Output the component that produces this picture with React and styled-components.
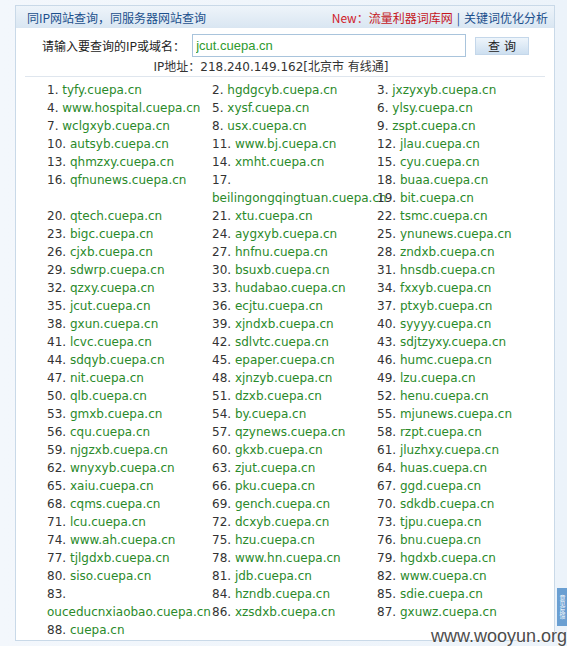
import React from 'react';
import styled, { createGlobalStyle } from 'styled-components';

const GlobalStyle = createGlobalStyle`
  html, body { margin: 0; padding: 0; }
  body {
    background: #eef4fa;
    font-family: "DejaVu Sans", "Noto Sans CJK SC", sans-serif;
    font-size: 12px;
    color: #333;
  }
`;

const Page = styled.div`
  position: relative;
  box-sizing: border-box;
  width: 567px;
  height: 646px;
  overflow: hidden;
  padding: 5px 0 0 15px;
  background: linear-gradient(to right, #f3f7fc 0%, #ecf3fa 100%);
`;

const Panel = styled.div`
  box-sizing: border-box;
  width: 540px;
  background: #fff;
  border: 1px solid #c9d9e8;
`;

const Header = styled.div`
  display: flex;
  align-items: center;
  justify-content: space-between;
  height: 22px;
  padding: 0 6px 0 11px;
  background: linear-gradient(#eef4fa, #d9e6f2);
  font-family: "Noto Sans CJK SC", sans-serif;
  font-size: 12px;
`;

const HeadLink = styled.a`
  color: ${(p) => (p.$red ? '#c4161c' : '#1b4f8c')};
  text-decoration: none;
`;

const NewTag = styled.span`
  color: #d0202a;
`;

const Sep = styled.span`
  color: #1b4f8c;
  margin: 0 4px;
`;

const FormRow = styled.form`
  display: flex;
  align-items: center;
  padding: 6px 0 0 26px;
  margin: 0;
`;

const Label = styled.label`
  font-family: "Noto Sans CJK SC", sans-serif;
  font-size: 12px;
  color: #222;
`;

const Input = styled.input`
  box-sizing: border-box;
  width: 274px;
  height: 23px;
  margin-left: 7px;
  padding: 0 3px;
  border: 1px solid #a9c4dc;
  font-family: "Liberation Sans", Arial, sans-serif;
  font-size: 13px;
  color: #2e9a2e;
  outline: none;
`;

const Button = styled.button`
  box-sizing: border-box;
  width: 54px;
  height: 18px;
  margin-left: 9px;
  padding: 0;
  border: 1px solid #c4d7ea;
  background: linear-gradient(#eef5fb, #cddff0);
  font-family: "Noto Sans CJK SC", sans-serif;
  font-size: 12px;
  color: #222;
  letter-spacing: 4px;
  text-indent: 4px;
  line-height: 16px;
`;

const IpLine = styled.div`
  margin-top: 3px;
  padding-right: 28px;
  text-align: center;
  line-height: 14px;
  font-size: 12px;
  color: #333;
`;

const Divider = styled.div`
  margin: 2px 9px 0 9px;
  border-top: 1px solid #dfe6ee;
`;

const List = styled.ul`
  display: flow-root;
  list-style: none;
  margin: 4px 0 0;
  padding: 0 0 1px 31px;
`;

const Item = styled.li`
  float: left;
  width: 165px;
  line-height: 18px;
  color: #333;
`;

const Domain = styled.a`
  color: #2a8a2a;
  text-decoration: none;
`;

const Watermark = styled.div`
  position: absolute;
  right: 0;
  bottom: 0;
  font-family: "Liberation Sans", Arial, sans-serif;
  font-size: 18px;
  line-height: 20px;
  color: #4d4d4d;
  text-shadow: 0 0 2px #fff, 0 0 2px #fff;
`;

const FeedbackTab = styled.div`
  position: absolute;
  right: 0;
  top: 588px;
  width: 10px;
  height: 38px;
  background: #6a9fd2;
  color: #fff;
  font-size: 6px;
  line-height: 10px;
  writing-mode: vertical-rl;
  text-align: center;
  overflow: hidden;
  font-family: "Noto Sans CJK SC", sans-serif;
`;

const names = [
  'tyfy', 'hgdgcyb', 'jxzyxyb', 'www.hospital', 'xysf', 'ylsy', 'wclgxyb', 'usx', 'zspt',
  'autsyb', 'www.bj', 'jlau', 'qhmzxy', 'xmht', 'cyu', 'qfnunews', 'beilingongqingtuan', 'buaa',
  'bit', 'qtech', 'xtu', 'tsmc', 'bigc', 'aygxyb', 'ynunews', 'cjxb', 'hnfnu', 'zndxb', 'sdwrp',
  'bsuxb', 'hnsdb', 'qzxy', 'hudabao', 'fxxyb', 'jcut', 'ecjtu', 'ptxyb', 'gxun', 'xjndxb',
  'syyyy', 'lcvc', 'sdlvtc', 'sdjtzyxy', 'sdqyb', 'epaper', 'humc', 'nit', 'xjnzyb', 'lzu',
  'qlb', 'dzxb', 'henu', 'gmxb', 'by', 'mjunews', 'cqu', 'qzynews', 'rzpt', 'njgzxb', 'gkxb',
  'jluzhxy', 'wnyxyb', 'zjut', 'huas', 'xaiu', 'pku', 'ggd', 'cqms', 'gench', 'sdkdb', 'lcu',
  'dcxyb', 'tjpu', 'www.ah', 'hzu', 'bnu', 'tjlgdxb', 'www.hn', 'hgdxb', 'siso', 'jdb', 'www',
  'ouceducnxiaobao', 'hzndb', 'sdie', 'xzsdxb', 'gxuwz', '',
];

const domains = names.map((n) => (n ? `${n}.cuepa.cn` : 'cuepa.cn'));

export default function App() {
  return (
    <>
      <GlobalStyle />
      <Page>
        <Panel>
          <Header>
            <HeadLink href="#">同IP网站查询，同服务器网站查询</HeadLink>
            <span>
              <NewTag>New：</NewTag>
              <HeadLink href="#" $red>流量利器词库网</HeadLink>
              <Sep>|</Sep>
              <HeadLink href="#">关键词优化分析</HeadLink>
            </span>
          </Header>
          <FormRow onSubmit={(e) => e.preventDefault()}>
            <Label>请输入要查询的IP或域名：</Label>
            <Input defaultValue="jcut.cuepa.cn" />
            <Button type="submit">查询</Button>
          </FormRow>
          <IpLine>IP地址：218.240.149.162[北京市 有线通]</IpLine>
          <Divider />
          <List>
            {domains.map((d, i) => (
              <Item key={i}>
                {i + 1}. <Domain href="#">{d}</Domain>
              </Item>
            ))}
          </List>
        </Panel>
        <FeedbackTab>意见反馈</FeedbackTab>
        <Watermark>www.wooyun.org</Watermark>
      </Page>
    </>
  );
}
